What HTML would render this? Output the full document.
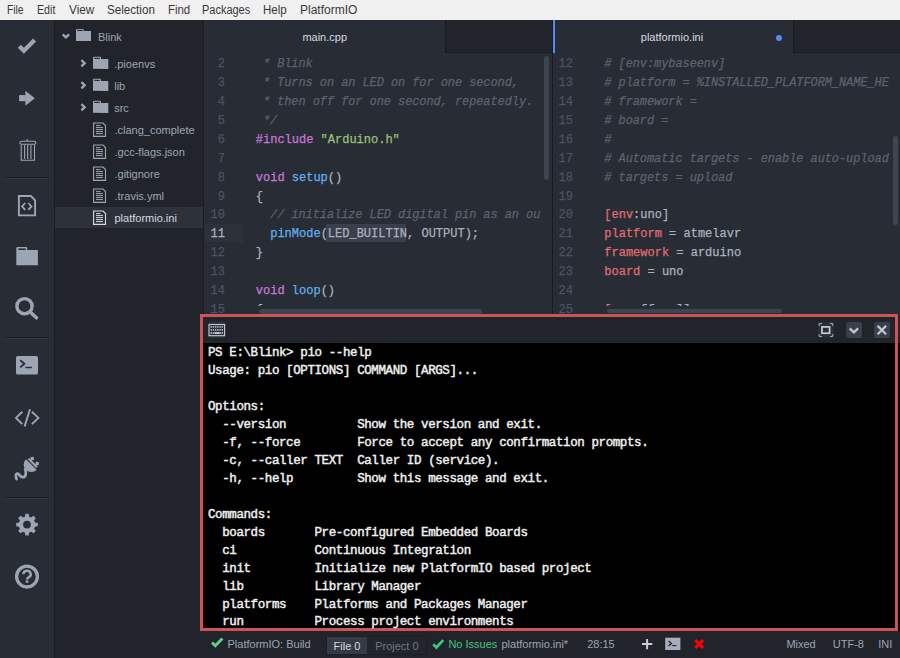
<!DOCTYPE html>
<html><head><meta charset="utf-8">
<style>
*{margin:0;padding:0;box-sizing:border-box}
html,body{width:900px;height:658px;overflow:hidden;background:#21252b;font-family:"Liberation Sans",sans-serif}
.a{position:absolute}
#menu{left:0;top:0;width:900px;height:20px;background:#f0f0f0;color:#383838;font-size:12px}
#menu span{position:absolute;top:3px;line-height:14px;white-space:nowrap}
#lbar{left:0;top:20px;width:55px;height:638px;background:#282c34;border-right:1px solid #1b1d23}
#tree{left:55px;top:20px;width:149px;height:611px;background:#21252b;border-right:1px solid #1b1d23}
.tt{position:absolute;color:#9da5b4;font-size:11px;line-height:12px;white-space:nowrap}
.pane{top:20px;background:#282c34;overflow:hidden}
.code{position:absolute;font-family:"Liberation Mono",monospace;font-size:12px;line-height:18.9px;white-space:pre;-webkit-text-stroke:0.25px currentColor}
.ln{color:#4b5363}
.ln.cur{color:#abb2bf}
.c{color:#5c6370;font-style:italic;letter-spacing:-0.09px}
.k{color:#c678dd}
.f{color:#61afef}
.s{color:#98c379}
.r{color:#e06c75}
.t{color:#abb2bf}
#term{left:200px;top:314px;width:698px;height:317px;border:3px solid #cd5454;background:#000}
#thead{position:absolute;left:0;top:0;width:692px;height:26px;background:#21252b}
.tl{position:absolute;left:5px;font-family:"Liberation Mono",monospace;font-size:12.5px;letter-spacing:-0.4px;line-height:17.8px;white-space:pre;color:#f0f0f0;font-weight:normal;-webkit-text-stroke:0.45px #f0f0f0}
#status{left:55px;top:631px;width:845px;height:27px;background:#21252b}
.st{position:absolute;color:#9da5b4;font-size:11px;line-height:12px;white-space:nowrap}
.sb{position:absolute;background:#3f4451;border-radius:3px}
</style></head><body>
<div id="menu" class="a">
<span style="left:6.5px;transform:scaleX(0.85);transform-origin:0 0">File</span><span style="left:36.5px;transform:scaleX(0.89);transform-origin:0 0">Edit</span><span style="left:68.5px;transform:scaleX(0.98);transform-origin:0 0">View</span><span style="left:106.5px;transform:scaleX(0.97);transform-origin:0 0">Selection</span><span style="left:167.5px;transform:scaleX(0.95);transform-origin:0 0">Find</span><span style="left:202px;transform:scaleX(0.915);transform-origin:0 0">Packages</span><span style="left:263px;transform:scaleX(0.96);transform-origin:0 0">Help</span><span style="left:300px">PlatformIO</span>
</div>
<div id="lbar" class="a"></div>
<svg class="a" style="left:0;top:0" width="54" height="658" viewBox="0 0 54 658">
<g fill="none" stroke="#9da5b4">
<polyline points="19.3,46.3 23.9,50.8 34.6,40.1" stroke-width="4.2" stroke-linejoin="miter"/>
</g>
<g fill="#9da5b4">
<rect x="19.1" y="95.1" width="6.6" height="6.1"/>
<polygon points="25.4,90.7 34.8,98.2 25.4,105.8"/>
</g>
<g fill="none" stroke="#9da5b4" stroke-width="1.1">
<rect x="19.9" y="141.3" width="16" height="3" rx="1.5"/>
<path d="M21.2 144.8 V160.2 H34.5 V144.8 M24.6 145 V159 M27.7 145 V159 M30.9 145 V159"/>
<path d="M27.2 141 V139.3" stroke-width="1.3"/>
</g>
<rect x="5" y="177" width="44" height="1" fill="#191b20"/><rect x="5" y="178" width="44" height="1" fill="#33373f"/>
<g fill="none" stroke="#9da5b4" stroke-width="1.9">
<path d="M18.9 196 H31 L35.1 200.3 V215.4 H18.9 Z" stroke-linejoin="miter"/>
<path d="M25.2 203 L22 206.4 L25.2 209.9 M28.3 203 L31.5 206.4 L28.3 209.9" stroke-width="1.8"/>
</g>
<g fill="#9da5b4">
<path d="M16.3 265.2 V248 Q16.3 247 17.3 247 H26.2 Q27.2 247 27.2 248 V250 H37.9 V265.2 Z"/>
<rect x="18.4" y="248.4" width="7.2" height="1.6" fill="#282c34"/>
</g>
<g fill="none" stroke="#9da5b4" stroke-width="3.4">
<circle cx="24.5" cy="306.2" r="7.6"/>
<path d="M30.2 312 L36.4 317.8" stroke-linecap="round" stroke-width="3.6"/>
</g>
<rect x="5" y="337" width="44" height="1" fill="#191b20"/><rect x="5" y="338" width="44" height="1" fill="#33373f"/>
<g>
<rect x="16" y="356" width="22" height="18.6" rx="1.6" fill="#9da5b4"/>
<path d="M20.2 360.2 L24.4 363.8 L20.2 367.4" fill="none" stroke="#282c34" stroke-width="1.8"/>
<rect x="25.3" y="366.8" width="6.6" height="1.4" fill="#282c34"/>
</g>
<g fill="none" stroke="#9da5b4" stroke-width="1.9">
<path d="M22.3 411.8 L16 417.9 L22.3 424.1 M31.9 411.8 L38.4 417.9 L31.9 424.1"/>
<path d="M30 409.3 L24.6 426.5"/>
</g>
<g transform="translate(31.3,464.5) rotate(45)" fill="#9da5b4">
<path d="M-7.6 0 H7.6 A7.6 7.6 0 0 1 -7.6 0 Z"/>
<rect x="-6" y="-3.1" width="12" height="2.1"/>
<rect x="-4.6" y="-6.8" width="2.2" height="4"/>
<rect x="2.4" y="-6.8" width="2.2" height="4"/>
<rect x="-5.5" y="-5.6" width="4" height="1.6"/>
<rect x="1.5" y="-5.6" width="4" height="1.6"/>
</g>
<path d="M25.2 469 C 26.5 473, 26 477.2, 22.6 477.2 C 19.6 477.2, 19.8 473.6, 17.6 473.6 C 15.6 473.6, 15.4 476.5, 16.6 479" fill="none" stroke="#9da5b4" stroke-width="2.8" stroke-linecap="round"/>
<rect x="5" y="497" width="44" height="1" fill="#191b20"/><rect x="5" y="498" width="44" height="1" fill="#33373f"/>
<path fill="#9da5b4" fill-rule="evenodd" d="M23.86,517.02 L24.88,516.68 L25.39,513.82 L28.61,513.82 L29.12,516.68 L30.14,517.02 L31.10,517.50 L33.48,515.84 L35.76,518.12 L34.10,520.50 L34.58,521.46 L34.92,522.48 L37.78,522.99 L37.78,526.21 L34.92,526.72 L34.58,527.74 L34.10,528.70 L35.76,531.08 L33.48,533.36 L31.10,531.70 L30.14,532.18 L29.12,532.52 L28.61,535.38 L25.39,535.38 L24.88,532.52 L23.86,532.18 L22.90,531.70 L20.52,533.36 L18.24,531.08 L19.90,528.70 L19.42,527.74 L19.08,526.72 L16.22,526.21 L16.22,522.99 L19.08,522.48 L19.42,521.46 L19.90,520.50 L18.24,518.12 L20.52,515.84 L22.90,517.50 Z M30.9 524.6 A3.9 3.9 0 1 0 23.1 524.6 A3.9 3.9 0 1 0 30.9 524.6 Z"/>
<g fill="none" stroke="#9da5b4" stroke-width="3.3">
<circle cx="27" cy="576.6" r="10.4"/>
</g>
<path d="M23.3 574.2 A3.7 3.5 0 1 1 28.6 577.4 Q27 578.2 27 579.6" fill="none" stroke="#9da5b4" stroke-width="2.5"/>
<rect x="25.7" y="580.4" width="2.6" height="2.3" fill="#9da5b4"/>
</svg>
<div id="tree" class="a"></div>
<div class="a" style="left:55px;top:207px;width:148px;height:21px;background:#2c313a"></div>
<div class="tt" style="left:98px;top:30.9px">Blink</div>
<div class="tt" style="left:114.2px;top:58.2px">.pioenvs</div>
<div class="tt" style="left:114.2px;top:80.2px">lib</div>
<div class="tt" style="left:114.2px;top:102.2px">src</div>
<div class="tt" style="left:114.5px;top:124.0px">.clang_complete</div>
<div class="tt" style="left:114.5px;top:146.0px">.gcc-flags.json</div>
<div class="tt" style="left:114.5px;top:168.0px">.gitignore</div>
<div class="tt" style="left:114.5px;top:190.0px">.travis.yml</div>
<div class="tt" style="left:114.5px;top:212.0px;color:#d7dae0">platformio.ini</div>
<svg class="a" style="left:0;top:0" width="204" height="240" viewBox="0 0 204 240">
<path d="M62.7 34.3 L65.9 37.3 L69.1 34.3" fill="none" stroke="#9da5b4" stroke-width="2.3"/>
<path d="M76 41 V30 Q76 29 77 29 H82.7 Q83.7 29 83.7 30 V31 H91 V41 Z" fill="#9da5b4"/><rect x="77.2" y="29.9" width="5.4" height="1.1" fill="#21252b"/>
<path d="M81.4 60.1 L84.7 63.2 L81.4 66.3" fill="none" stroke="#9da5b4" stroke-width="2.3"/>
<path d="M93 68.7 V57.7 Q93 56.7 94 56.7 H100 Q101 56.7 101 57.7 V58.9 H108.3 V68.9 Z" fill="#9da5b4"/><rect x="94.2" y="57.8" width="5.6" height="1.1" fill="#21252b"/>
<path d="M81.4 82.1 L84.7 85.2 L81.4 88.3" fill="none" stroke="#9da5b4" stroke-width="2.3"/>
<path d="M93 90.7 V79.7 Q93 78.7 94 78.7 H100 Q101 78.7 101 79.7 V80.9 H108.3 V90.9 Z" fill="#9da5b4"/><rect x="94.2" y="79.8" width="5.6" height="1.1" fill="#21252b"/>
<path d="M81.4 104.1 L84.7 107.2 L81.4 110.3" fill="none" stroke="#9da5b4" stroke-width="2.3"/>
<path d="M93 112.7 V101.7 Q93 100.7 94 100.7 H100 Q101 100.7 101 101.7 V102.9 H108.3 V112.9 Z" fill="#9da5b4"/><rect x="94.2" y="101.8" width="5.6" height="1.1" fill="#21252b"/>
<path d="M93.6 123 H103 L105.5 125.5 V136.4 H93.6 Z" fill="none" stroke="#9da5b4" stroke-width="1.1"/>
<path d="M96 125.6 H100.5 M96 127.6 H103 M96 129.6 H103 M96 131.6 H103 M96 133.6 H103" stroke="#9da5b4" stroke-width="1"/>
<path d="M93.6 145 H103 L105.5 147.5 V158.4 H93.6 Z" fill="none" stroke="#9da5b4" stroke-width="1.1"/>
<path d="M96 147.6 H100.5 M96 149.6 H103 M96 151.6 H103 M96 153.6 H103 M96 155.6 H103" stroke="#9da5b4" stroke-width="1"/>
<path d="M93.6 167 H103 L105.5 169.5 V180.4 H93.6 Z" fill="none" stroke="#9da5b4" stroke-width="1.1"/>
<path d="M96 169.6 H100.5 M96 171.6 H103 M96 173.6 H103 M96 175.6 H103 M96 177.6 H103" stroke="#9da5b4" stroke-width="1"/>
<path d="M93.6 189 H103 L105.5 191.5 V202.4 H93.6 Z" fill="none" stroke="#9da5b4" stroke-width="1.1"/>
<path d="M96 191.6 H100.5 M96 193.6 H103 M96 195.6 H103 M96 197.6 H103 M96 199.6 H103" stroke="#9da5b4" stroke-width="1"/>
<path d="M93.6 211 H103 L105.5 213.5 V224.4 H93.6 Z" fill="none" stroke="#d7dae0" stroke-width="1.1"/>
<path d="M96 213.6 H100.5 M96 215.6 H103 M96 217.6 H103 M96 219.6 H103 M96 221.6 H103" stroke="#d7dae0" stroke-width="1"/>
</svg>
<div class="a" style="left:204px;top:20px;width:348px;height:294px;background:#282c34;overflow:hidden">
</div>
<div class="a" style="left:445px;top:20px;width:107px;height:33px;background:#21252b;border-left:1px solid #181a1f;border-bottom:1px solid #181a1f"></div>
<div class="tt" style="left:302.4px;top:31px;color:#d7dae0">main.cpp</div>
<div class="a" style="left:205px;top:223.5px;width:38px;height:18.5px;background:#2c313a"></div>
<div class="a" style="left:326px;top:223.5px;width:79.5px;height:18.5px;background:#3a3f4b"></div>
<div class="a" style="left:204px;top:53px;width:339px;height:261px;overflow:hidden">
<div class="code ln" style="top:2.20px;left:-9px;width:30px;text-align:right">2</div>
<div class="code" style="top:2.20px;left:51.80000000000001px"><span class="c"> * Blink</span></div>
<div class="code ln" style="top:21.10px;left:-9px;width:30px;text-align:right">3</div>
<div class="code" style="top:21.10px;left:51.80000000000001px"><span class="c"> * Turns on an LED on for one second,</span></div>
<div class="code ln" style="top:40.00px;left:-9px;width:30px;text-align:right">4</div>
<div class="code" style="top:40.00px;left:51.80000000000001px"><span class="c"> * then off for one second, repeatedly.</span></div>
<div class="code ln" style="top:58.90px;left:-9px;width:30px;text-align:right">5</div>
<div class="code" style="top:58.90px;left:51.80000000000001px"><span class="c"> */</span></div>
<div class="code ln" style="top:77.80px;left:-9px;width:30px;text-align:right">6</div>
<div class="code" style="top:77.80px;left:51.80000000000001px"><span class="k">#include</span> <span class="s">"Arduino.h"</span></div>
<div class="code ln" style="top:96.70px;left:-9px;width:30px;text-align:right">7</div>
<div class="code ln" style="top:115.60px;left:-9px;width:30px;text-align:right">8</div>
<div class="code" style="top:115.60px;left:51.80000000000001px"><span class="k">void</span> <span class="f">setup</span><span class="t">()</span></div>
<div class="code ln" style="top:134.50px;left:-9px;width:30px;text-align:right">9</div>
<div class="code" style="top:134.50px;left:51.80000000000001px"><span class="t">{</span></div>
<div class="code ln" style="top:153.40px;left:-9px;width:30px;text-align:right">10</div>
<div class="code" style="top:153.40px;left:51.80000000000001px"><span class="c">  // initialize LED digital pin as an ou</span></div>
<div class="code ln cur" style="top:172.30px;left:-9px;width:30px;text-align:right">11</div>
<div class="code" style="top:172.30px;left:51.80000000000001px"><span class="t">  </span><span class="f">pinMode</span><span class="t">(LED_BUILTIN, OUTPUT);</span></div>
<div class="code ln" style="top:191.20px;left:-9px;width:30px;text-align:right">12</div>
<div class="code" style="top:191.20px;left:51.80000000000001px"><span class="t">}</span></div>
<div class="code ln" style="top:210.10px;left:-9px;width:30px;text-align:right">13</div>
<div class="code ln" style="top:229.00px;left:-9px;width:30px;text-align:right">14</div>
<div class="code" style="top:229.00px;left:51.80000000000001px"><span class="k">void</span> <span class="f">loop</span><span class="t">()</span></div>
<div class="code ln" style="top:247.90px;left:-9px;width:30px;text-align:right">15</div>
<div class="code" style="top:247.90px;left:51.80000000000001px"><span class="t">{</span></div>
</div>
<div class="sb" style="left:544px;top:56px;width:4.5px;height:124px"></div>
<div class="a" style="left:252px;top:306px;width:296px;height:8px;background:#282c34"></div>
<div class="sb" style="left:258.7px;top:309px;width:223px;height:4.5px"></div>
<div class="a" style="left:552px;top:20px;width:1px;height:294px;background:#181a1f"></div>
<div class="a" style="left:553px;top:20px;width:347px;height:294px;background:#282c34"></div>
<div class="a" style="left:793px;top:20px;width:107px;height:33px;background:#21252b;border-left:1px solid #181a1f;border-bottom:1px solid #181a1f"></div>
<div class="a" style="left:552.6px;top:20px;width:2.2px;height:33px;background:#568af2"></div>
<div class="tt" style="left:640.8px;top:31px;color:#d7dae0">platformio.ini</div>
<div class="a" style="left:776px;top:34.5px;width:6px;height:6px;border-radius:3px;background:#568af2"></div>
<div class="a" style="left:553px;top:53px;width:336px;height:261px;overflow:hidden">
<div class="code ln" style="top:2.20px;left:-10px;width:30px;text-align:right">12</div>
<div class="code" style="top:2.20px;left:51.299999999999955px"><span class="c"># [env:mybaseenv]</span></div>
<div class="code ln" style="top:21.10px;left:-10px;width:30px;text-align:right">13</div>
<div class="code" style="top:21.10px;left:51.299999999999955px"><span class="c"># platform = %INSTALLED_PLATFORM_NAME_HERE%</span></div>
<div class="code ln" style="top:40.00px;left:-10px;width:30px;text-align:right">14</div>
<div class="code" style="top:40.00px;left:51.299999999999955px"><span class="c"># framework =</span></div>
<div class="code ln" style="top:58.90px;left:-10px;width:30px;text-align:right">15</div>
<div class="code" style="top:58.90px;left:51.299999999999955px"><span class="c"># board =</span></div>
<div class="code ln" style="top:77.80px;left:-10px;width:30px;text-align:right">16</div>
<div class="code" style="top:77.80px;left:51.299999999999955px"><span class="c">#</span></div>
<div class="code ln" style="top:96.70px;left:-10px;width:30px;text-align:right">17</div>
<div class="code" style="top:96.70px;left:51.299999999999955px"><span class="c"># Automatic targets - enable auto-uploading</span></div>
<div class="code ln" style="top:115.60px;left:-10px;width:30px;text-align:right">18</div>
<div class="code" style="top:115.60px;left:51.299999999999955px"><span class="c"># targets = upload</span></div>
<div class="code ln" style="top:134.50px;left:-10px;width:30px;text-align:right">19</div>
<div class="code ln" style="top:153.40px;left:-10px;width:30px;text-align:right">20</div>
<div class="code" style="top:153.40px;left:51.299999999999955px"><span class="r">[env</span><span class="t">:</span><span class="t">uno]</span></div>
<div class="code ln" style="top:172.30px;left:-10px;width:30px;text-align:right">21</div>
<div class="code" style="top:172.30px;left:51.299999999999955px"><span class="r">platform</span><span class="t"> = atmelavr</span></div>
<div class="code ln" style="top:191.20px;left:-10px;width:30px;text-align:right">22</div>
<div class="code" style="top:191.20px;left:51.299999999999955px"><span class="r">framework</span><span class="t"> = arduino</span></div>
<div class="code ln" style="top:210.10px;left:-10px;width:30px;text-align:right">23</div>
<div class="code" style="top:210.10px;left:51.299999999999955px"><span class="r">board</span><span class="t"> = uno</span></div>
<div class="code ln" style="top:229.00px;left:-10px;width:30px;text-align:right">24</div>
<div class="code ln" style="top:247.90px;left:-10px;width:30px;text-align:right">25</div>
<div class="code" style="top:247.90px;left:51.299999999999955px"><span class="r">[</span><span class="t">    ff   ]]</span></div>
</div>
<div class="sb" style="left:893px;top:136px;width:4.5px;height:89px"></div>
<div class="a" style="left:600px;top:306px;width:300px;height:8px;background:#282c34"></div>
<div class="sb" style="left:607px;top:308.5px;width:175px;height:4.5px"></div>
<div id="term" class="a"><div id="thead"></div>
<div class="tl" style="top:28.20px">PS E:\Blink> pio --help</div>
<div class="tl" style="top:46.15px">Usage: pio [OPTIONS] COMMAND [ARGS]...</div>
<div class="tl" style="top:64.10px"></div>
<div class="tl" style="top:82.05px">Options:</div>
<div class="tl" style="top:100.00px">  --version          Show the version and exit.</div>
<div class="tl" style="top:117.95px">  -f, --force        Force to accept any confirmation prompts.</div>
<div class="tl" style="top:135.90px">  -c, --caller TEXT  Caller ID (service).</div>
<div class="tl" style="top:153.85px">  -h, --help         Show this message and exit.</div>
<div class="tl" style="top:171.80px"></div>
<div class="tl" style="top:189.75px">Commands:</div>
<div class="tl" style="top:207.70px">  boards       Pre-configured Embedded Boards</div>
<div class="tl" style="top:225.65px">  ci           Continuous Integration</div>
<div class="tl" style="top:243.60px">  init         Initialize new PlatformIO based project</div>
<div class="tl" style="top:261.55px">  lib          Library Manager</div>
<div class="tl" style="top:279.50px">  platforms    Platforms and Packages Manager</div>
<div class="tl" style="top:297.45px">  run          Process project environments</div>
<svg class="a" style="left:-3px;top:-3px" width="698" height="40" viewBox="200 314 698 40">
<rect x="208" y="321.5" width="17.5" height="16.5" rx="2.5" fill="#2c3039"/>
<rect x="209" y="324.5" width="15.6" height="11.2" fill="none" stroke="#c6cbd4" stroke-width="1.1"/>
<path d="M210.6 326.8 H223 M210.6 329.8 H223 M210.6 333 H223" stroke="#a9b1c0" stroke-width="1.8" stroke-dasharray="1.4 0.8"/>
<rect x="214.5" y="332.1" width="5" height="1.8" fill="#c6cbd4"/>
<rect x="818" y="322" width="16" height="16" rx="2.5" fill="#2a2e36"/>
<path d="M819.2 326 V323.6 H822 M830 323.6 H832.8 V326 M832.8 334 V336.4 H830 M822 336.4 H819.2 V334" fill="none" stroke="#a9b1c0" stroke-width="1"/>
<rect x="822" y="326.9" width="7.6" height="6.3" fill="none" stroke="#c0c5ce" stroke-width="1.8"/>
<rect x="846.2" y="322" width="15.8" height="16" rx="2.5" fill="#3a3f4b"/>
<path d="M849.7 328.4 L853.9 332.4 L858.1 328.4" fill="none" stroke="#c0c5ce" stroke-width="2.3"/>
<rect x="874" y="322" width="16" height="16" rx="2.5" fill="#3a3f4b"/>
<path d="M877.6 325.9 L886.1 334.2 M886.1 325.9 L877.6 334.2" fill="none" stroke="#c0c5ce" stroke-width="2.3"/>
</svg>
</div>
<div id="status" class="a"></div>
<div class="a" style="left:898px;top:317px;width:2px;height:26px;background:#21252b"></div><div class="a" style="left:898px;top:343px;width:2px;height:288px;background:#000"></div>
<div class="st" style="left:227.5px;top:637.8px">PlatformIO: Build</div>
<div class="a" style="left:326px;top:635.5px;width:100.5px;height:19.7px;background:#22262c;border:1px solid #1b1e23;border-radius:2px"></div>
<div class="a" style="left:327px;top:636.5px;width:40px;height:17.7px;background:#353b45"></div>
<div class="st" style="left:333.6px;top:640.3px;color:#d7dae0">File 0</div>
<div class="st" style="left:375.2px;top:640.3px;color:#6e7685">Project 0</div>
<div class="st" style="left:448.4px;top:637.8px;color:#3ec77c">No Issues</div>
<div class="st" style="left:501.5px;top:637.8px">platformio.ini*</div>
<div class="st" style="left:587.2px;top:637.8px">28:15</div>
<div class="st" style="left:786.4px;top:637.8px">Mixed</div>
<div class="st" style="left:832.8px;top:637.8px">UTF-8</div>
<div class="st" style="left:878.2px;top:637.8px">INI</div>
<svg class="a" style="left:0;top:0" width="900" height="658" viewBox="0 0 900 658" >
<path d="M212 642.5 L215.3 645.8 L222.4 638.5" fill="none" stroke="#66cf8a" stroke-width="2.8"/>
<path d="M433.2 644.2 L436.4 647.4 L443.2 640.1" fill="none" stroke="#3ec77c" stroke-width="2.8"/>
<path d="M647.1 639 V649.2 M642 644.1 H652.3" stroke="#c8ccd4" stroke-width="2"/>
<rect x="665.2" y="637.7" width="15.2" height="12.3" fill="#a6adbb"/>
<path d="M668.6 641 L671.4 643.5 L668.6 646" fill="none" stroke="#21252b" stroke-width="1.4"/>
<rect x="672.2" y="645" width="4.2" height="1.1" fill="#21252b"/>
<path d="M695.3 640.1 L703.1 648 M703.1 640.1 L695.3 648" stroke="#ff0000" stroke-width="3"/>
</svg>
</body></html>
